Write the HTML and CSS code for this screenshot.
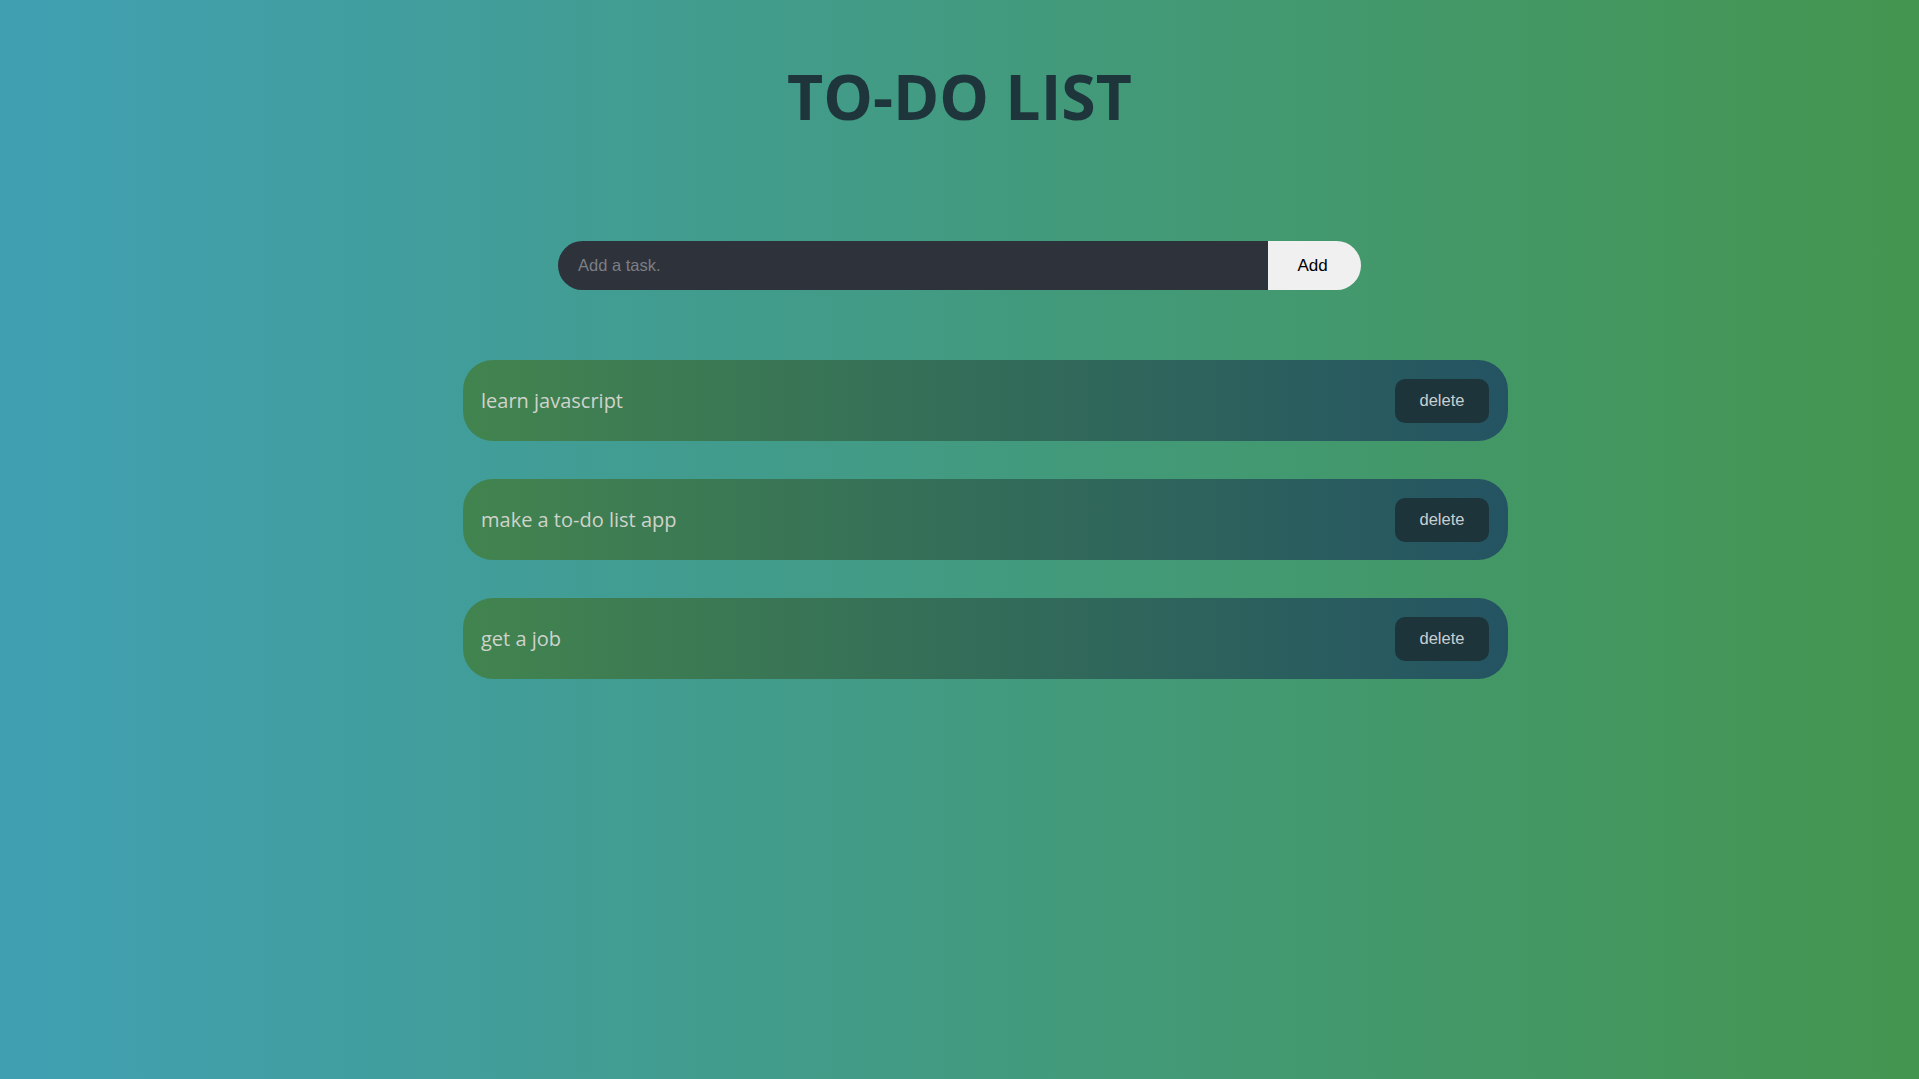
FILE: index.html
```html
<!DOCTYPE html>
<html>
<head>
<meta charset="utf-8">
<title>To-Do List</title>
<link rel="stylesheet" href="styles.css">
</head>
<body>
<main class="app">
  <h1 class="title">TO-DO LIST</h1>
  <form class="add-form">
    <input class="task-input" type="text" placeholder="Add a task.">
    <button class="add-btn" type="button">Add</button>
  </form>
  <ul class="task-list">
    <li class="task"><span class="task-text">learn javascript</span><button class="delete-btn" type="button">delete</button></li>
    <li class="task"><span class="task-text">make a to-do list app</span><button class="delete-btn" type="button">delete</button></li>
    <li class="task"><span class="task-text">get a job</span><button class="delete-btn" type="button">delete</button></li>
  </ul>
</main>
</body>
</html>
```
FILE: styles.css
```css
html, body {
  margin: 0;
  padding: 0;
  height: 100%;
}
body {
  background: linear-gradient(to right, #40a0b2, #44954f);
  font-family: "Open Sans", sans-serif;
}
.app {
  display: flex;
  flex-direction: column;
  align-items: center;
}
.title {
  margin: 52px 0 0;
  font-size: 62.5px;
  line-height: 87px;
  font-weight: 700;
  color: #1e363b;
}
.add-form {
  display: flex;
  margin-top: 102px;
  height: 49px;
}
.task-input {
  width: 710px;
  height: 49px;
  box-sizing: border-box;
  border: none;
  outline: none;
  background: #2e323b;
  border-radius: 25px 0 0 25px;
  padding: 0 20px;
  font-family: "Liberation Sans", Arial, sans-serif;
  font-size: 16.5px;
  color: #ddd;
}
.task-input::placeholder {
  color: #7c7f84;
}
.add-btn {
  width: 93px;
  height: 49px;
  border: none;
  background: #f0f0f0;
  border-radius: 0 25px 25px 0;
  font-family: "Liberation Sans", Arial, sans-serif;
  font-size: 17px;
  color: #000;
  padding: 0 4px 0 0;
  cursor: pointer;
}
.task-list {
  list-style: none;
  margin: 70px 0 0;
  padding: 0 0 0 52px;
  display: flex;
  flex-direction: column;
  gap: 38px;
}
.task {
  width: 1045px;
  height: 81px;
  box-sizing: border-box;
  display: flex;
  align-items: center;
  justify-content: space-between;
  padding: 0 19px 0 18px;
  border-radius: 30px;
  background: linear-gradient(to right, #42844f, #245462);
}
.task-text {
  font-size: 20px;
  color: #cfd3cc;
}
.delete-btn {
  width: 94px;
  height: 44px;
  border: none;
  border-radius: 10px;
  background: #1d353a;
  color: #c9cfd0;
  font-family: "Liberation Sans", Arial, sans-serif;
  font-size: 16.5px;
  cursor: pointer;
}
```
